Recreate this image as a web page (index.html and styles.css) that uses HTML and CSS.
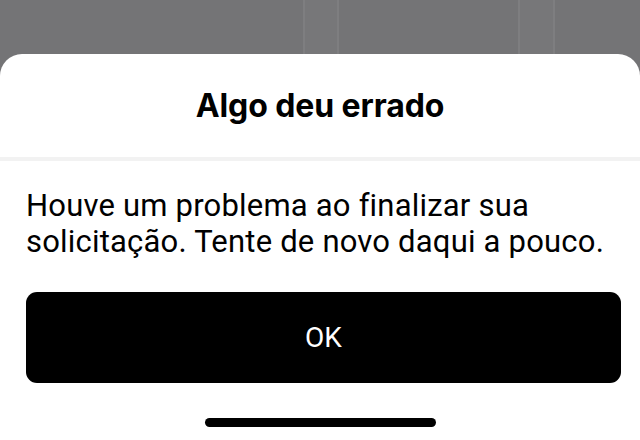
FILE: index.html
```html
<!DOCTYPE html>
<html lang="pt-BR">
<head>
    <meta charset="UTF-8">
    <meta name="viewport" content="width=device-width, initial-scale=1.0">
    <title>Algo deu errado</title>
    <link rel="stylesheet" href="styles.css">
</head>
<body>
    <div class="backdrop"></div>

    <section class="sheet">
        <header class="sheet-header">
            <h2 class="sheet-title">Algo deu errado</h2>
        </header>
        <div class="sheet-divider"></div>

        <p class="sheet-message">Houve um problema ao finalizar sua solicitação. Tente de novo daqui a pouco.</p>

        <button class="button-ok">OK</button>

        <div class="home-indicator"></div>
    </section>
</body>
</html>
```

FILE: styles.css
```css
html, body {
    margin: 0;
    height: 100%;
}
body {
    background-color: #747476;
    font-family: Roboto, "Liberation Sans", sans-serif;
    color: #000;
    display: flex;
    flex-direction: column;
    overflow: hidden;
}
.backdrop {
    height: 54px;
    flex-shrink: 0;
    background:
        linear-gradient(to right,
            transparent 303px, #7e7e80 303px, #7e7e80 305px,
            #777779 305px, #777779 337px, #7e7e80 337px, #7e7e80 339px,
            transparent 339px,
            transparent 518px, #7e7e80 518px, #7e7e80 520px,
            #777779 520px, #777779 553px, #7e7e80 553px, #7e7e80 555px,
            transparent 555px);
}
.sheet {
    flex-grow: 1;
    background-color: #fff;
    border-radius: 22px 22px 0 0;
    display: flex;
    flex-direction: column;
}
.sheet-header {
    height: 103px;
    display: flex;
    align-items: center;
    justify-content: center;
}
.sheet-title {
    margin: 0;
    font-family: Inter, "Noto Sans", sans-serif;
    font-size: 32px;
    font-weight: 700;
    letter-spacing: -0.1px;
}
.sheet-divider {
    height: 4px;
    background-color: #f2f2f2;
}
.sheet-message {
    margin: 27px 20px 0 26px;
    font-size: 31px;
    line-height: 36px;
    font-weight: 400;
    letter-spacing: 0.2px;
}
.button-ok {
    margin: 32px 19px 0 26px;
    height: 91px;
    border: none;
    border-radius: 11px;
    background-color: #000;
    color: #fff;
    font-family: Roboto, sans-serif;
    font-size: 28px;
    font-weight: 400;
}
.home-indicator {
    width: 231px;
    height: 9px;
    margin: 35px auto 0;
    border-radius: 5px;
    background-color: #000;
}
```
